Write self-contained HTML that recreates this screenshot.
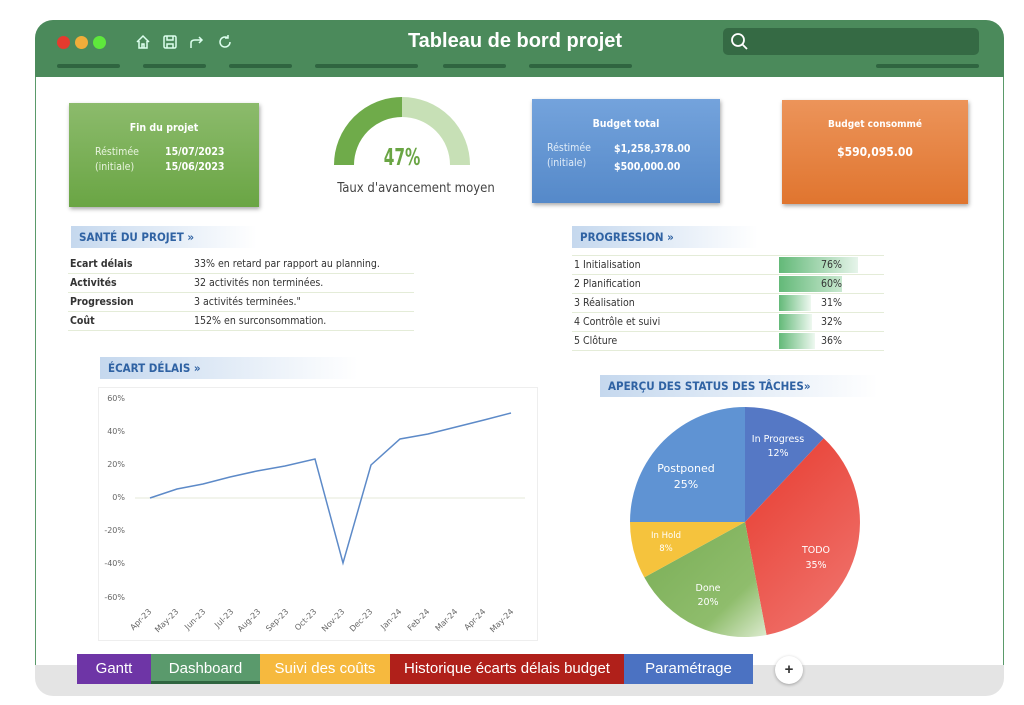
<!DOCTYPE html>
<html><head><meta charset="utf-8"><style>
*{margin:0;padding:0;box-sizing:border-box}
body{width:1024px;height:705px;background:#fff;position:relative;overflow:hidden;font-family:"Liberation Sans",sans-serif}
.a{position:absolute}
.win{left:35px;top:20px;width:969px;height:676px;border-radius:18px;background:#e4e4e4;overflow:hidden}
.hdr{left:0;top:0;width:969px;height:57px;background:#4b8a5b}
.content{left:0;top:57px;width:969px;height:588px;background:#fff;border-left:1px solid #5a9a6a;border-right:1px solid #5a9a6a}
.bar{height:4px;background:#2f6540;border-radius:2px;top:44px}
.card{color:#fff;font-family:"DejaVu Sans Condensed","DejaVu Sans",sans-serif;font-size:10.5px;text-align:center;box-shadow:1px 2px 4px rgba(0,0,0,.35)}
.sec{height:22px;background:linear-gradient(90deg,#c5d8ee,#fff);color:#2f62a3;font-family:"DejaVu Sans Condensed","DejaVu Sans",sans-serif;font-size:11.5px;font-weight:bold;line-height:22px;padding-left:8px}
.row{font-family:"DejaVu Sans Condensed","DejaVu Sans",sans-serif;font-size:10.5px;color:#333;height:19px;line-height:18px;border-bottom:1px solid #e4ecd8}
.tab{top:0;height:30px;color:#fff;font-size:15px;line-height:30px;text-align:center}
.ax{font-family:"DejaVu Sans",sans-serif;font-size:8px;fill:#666}
</style></head><body>
<div class="a win">
 <div class="a hdr">
  <div class="a" style="left:22px;top:16px;width:13px;height:13px;border-radius:50%;background:#e53a2e"></div>
  <div class="a" style="left:40px;top:16px;width:13px;height:13px;border-radius:50%;background:#f0ad3a"></div>
  <div class="a" style="left:58px;top:16px;width:13px;height:13px;border-radius:50%;background:#5ee83c"></div>
  <svg class="a" style="left:100px;top:13px" width="110" height="18" fill="none" stroke="#dfe" stroke-width="1.5">
   <path d="M2 9 L8 3 L14 9 M4 8 V15 H12 V8 M7 15 V11 H9 V15"/>
   <rect x="29" y="3" width="12" height="12" rx="1.5"/><path d="M32 3 V7 H38 V3 M32 15 V11 H38 V15"/>
   <path d="M56 15 V10 Q56 7 60 7 H67 M64 4 L67 7 L64 10"/>
   <path d="M93 5 A5 5 0 1 0 95 9 M93 2 V5 H90"/>
  </svg>
  <div class="a" style="left:330px;top:10px;width:300px;text-align:center;color:#fff;font-size:20px;font-weight:bold">Tableau de bord projet</div>
  <div class="a" style="left:688px;top:8px;width:256px;height:27px;border-radius:5px;background:#356a44"></div>
  <svg class="a" style="left:695px;top:12px" width="20" height="20" fill="none" stroke="#fff" stroke-width="1.8"><circle cx="8" cy="8" r="6"/><path d="M12.5 12.5 L17 17"/></svg>
  <div class="a bar" style="left:22px;width:63px"></div>
  <div class="a bar" style="left:108px;width:63px"></div>
  <div class="a bar" style="left:194px;width:63px"></div>
  <div class="a bar" style="left:280px;width:103px"></div>
  <div class="a bar" style="left:408px;width:63px"></div>
  <div class="a bar" style="left:494px;width:103px"></div>
  <div class="a bar" style="left:841px;width:103px"></div>
 </div>
 <div class="a content"></div>
</div>

<div class="a card" style="left:69px;top:103px;width:190px;height:104px;background:linear-gradient(#8cbb6c,#6aa544)">
 <div style="margin-top:19px;font-weight:bold">Fin du projet</div>
 <div class="a" style="left:26px;top:42px;text-align:left;line-height:15px;color:#e8f4de">Réstimée<br>(initiale)</div>
 <div class="a" style="left:96px;top:42px;text-align:left;line-height:15px;font-weight:bold">15/07/2023<br>15/06/2023</div>
</div>
<svg class="a" style="left:330px;top:95px" width="145" height="75">
 <path d="M14 70 A58 58 0 0 1 72 12" stroke="#6fab4a" stroke-width="20" fill="none"/>
 <path d="M72 12 A58 58 0 0 1 130 70" stroke="#c7e0b6" stroke-width="20" fill="none"/>
 <text x="0" y="0" text-anchor="middle" font-family="'DejaVu Sans Condensed',sans-serif" font-weight="bold" font-size="20" fill="#6aa544" transform="translate(72,70) scale(0.85,1.15)">47%</text>
</svg>
<div class="a" style="left:330px;top:181px;width:172px;text-align:center;font-family:'DejaVu Sans Condensed','DejaVu Sans',sans-serif;font-size:13px;color:#444">Taux d'avancement moyen</div>

<div class="a card" style="left:532px;top:99px;width:188px;height:104px;background:linear-gradient(#74a3dc,#5589c9)">
 <div style="margin-top:19px;font-weight:bold">Budget total</div>
 <div class="a" style="left:15px;top:42px;text-align:left;line-height:15px;color:#e0ecf8">Réstimée<br>(initiale)</div>
 <div class="a" style="left:82px;top:41px;text-align:left;line-height:18px;font-weight:bold">$1,258,378.00<br>$500,000.00</div>
</div>
<div class="a card" style="left:782px;top:100px;width:186px;height:104px;background:linear-gradient(#ec945a,#e0752f)">
 <div style="margin-top:19px;font-weight:bold;font-size:10px">Budget consommé</div>
 <div style="margin-top:15px;font-weight:bold;font-size:12px">$590,095.00</div>
</div>

<div class="a sec" style="left:71px;top:226px;width:186px">SANTÉ DU PROJET »</div>
<div class="a" style="left:68px;top:255px;width:346px">
 <div class="row"><b class="a" style="left:2px">Ecart délais</b><span class="a" style="left:126px">33% en retard par rapport au planning.</span></div>
 <div class="row"><b class="a" style="left:2px;top:19px">Activités</b><span class="a" style="left:126px;top:19px">32 activités non terminées.</span></div>
 <div class="row"><b class="a" style="left:2px;top:38px">Progression</b><span class="a" style="left:126px;top:38px">3 activités terminées."</span></div>
 <div class="row"><b class="a" style="left:2px;top:57px">Coût</b><span class="a" style="left:126px;top:57px">152% en surconsommation.</span></div>
</div>

<div class="a sec" style="left:572px;top:226px;width:186px">PROGRESSION »</div>
<div class="a" style="left:572px;top:255px;width:312px;border-top:1px solid #e4ecd8">
 <div class="row" style="position:relative;padding-left:2px">1 Initialisation<div class="a" style="left:207px;top:1px;width:79px;height:16px;background:linear-gradient(90deg,#63b978,#e6f4ea)"></div><span class="a" style="left:249px">76%</span></div>
 <div class="row" style="position:relative;padding-left:2px">2 Planification<div class="a" style="left:207px;top:1px;width:63px;height:16px;background:linear-gradient(90deg,#63b978,#c9e8d0)"></div><span class="a" style="left:249px">60%</span></div>
 <div class="row" style="position:relative;padding-left:2px">3 Réalisation<div class="a" style="left:207px;top:1px;width:32px;height:16px;background:linear-gradient(90deg,#63b978,#eef8f0)"></div><span class="a" style="left:249px">31%</span></div>
 <div class="row" style="position:relative;padding-left:2px">4 Contrôle et suivi<div class="a" style="left:207px;top:1px;width:33px;height:16px;background:linear-gradient(90deg,#63b978,#eef8f0)"></div><span class="a" style="left:249px">32%</span></div>
 <div class="row" style="position:relative;padding-left:2px">5 Clôture<div class="a" style="left:207px;top:1px;width:36px;height:16px;background:linear-gradient(90deg,#63b978,#eef8f0)"></div><span class="a" style="left:249px">36%</span></div>
</div>

<div class="a sec" style="left:100px;top:357px;width:258px">ÉCART DÉLAIS »</div>
<div class="a" style="left:98px;top:387px;width:440px;height:254px;border:1px solid #eee"></div>
<svg class="a" style="left:0;top:0" width="560" height="660">
 <g class="ax" text-anchor="end">
  <text x="125" y="401">60%</text><text x="125" y="434">40%</text><text x="125" y="467">20%</text><text x="125" y="500">0%</text><text x="125" y="533">-20%</text><text x="125" y="566">-40%</text><text x="125" y="600">-60%</text>
 </g>
 <line x1="135" y1="498" x2="525" y2="498" stroke="#e4ead8"/>
 <polyline fill="none" stroke="#5d8ac8" stroke-width="1.5" points="150,498 177,489 203,484 230,477 257,471 285,466 315,459 343,563 371,465 400,439 428,434 456,427 484,420 511,413"/>
 <g class="ax" text-anchor="end">
  <text transform="translate(152,612) rotate(-45)">Apr-23</text><text transform="translate(179,612) rotate(-45)">May-23</text><text transform="translate(206,612) rotate(-45)">Jun-23</text><text transform="translate(234,612) rotate(-45)">Jul-23</text><text transform="translate(261,612) rotate(-45)">Aug-23</text><text transform="translate(289,612) rotate(-45)">Sep-23</text><text transform="translate(317,612) rotate(-45)">Oct-23</text><text transform="translate(345,612) rotate(-45)">Nov-23</text><text transform="translate(373,612) rotate(-45)">Dec-23</text><text transform="translate(402,612) rotate(-45)">Jan-24</text><text transform="translate(430,612) rotate(-45)">Feb-24</text><text transform="translate(458,612) rotate(-45)">Mar-24</text><text transform="translate(486,612) rotate(-45)">Apr-24</text><text transform="translate(514,612) rotate(-45)">May-24</text>
 </g>
</svg>

<div class="a sec" style="left:600px;top:375px;width:278px">APERÇU DES STATUS DES TÂCHES»</div>
<svg class="a" style="left:600px;top:400px" width="280" height="245" font-family="'DejaVu Sans',sans-serif" font-size="9.5" fill="#fff" text-anchor="middle">
 <defs>
  <linearGradient id="gr" x1="0" y1="0" x2="0.6" y2="1"><stop offset="0" stop-color="#e73a2e"/><stop offset="1" stop-color="#ef6f68"/></linearGradient>
  <linearGradient id="gg" x1="0" y1="0" x2="1" y2="1"><stop offset="0" stop-color="#79ad55"/><stop offset="0.7" stop-color="#8fbd6c"/><stop offset="1" stop-color="#dcebcf"/></linearGradient>
 </defs>
 <path d="M145 122 L145 7 A115 115 0 0 1 223.7 38.2 Z" fill="#5578c5"/>
 <path d="M145 122 L223.7 38.2 A115 115 0 0 1 166.5 235 Z" fill="url(#gr)"/>
 <path d="M145 122 L166.5 235 A115 115 0 0 1 44.3 177.4 Z" fill="url(#gg)"/>
 <path d="M145 122 L44.3 177.4 A115 115 0 0 1 30 122 Z" fill="#f5c33d"/>
 <path d="M145 122 L30 122 A115 115 0 0 1 145 7 Z" fill="#5f93d3"/>
 <text x="178" y="42">In Progress</text><text x="178" y="56">12%</text>
 <text x="86" y="72" font-size="11">Postponed</text><text x="86" y="88" font-size="11">25%</text>
 <text x="216" y="153">TODO</text><text x="216" y="168">35%</text>
 <text x="66" y="138" font-size="8.5">In Hold</text><text x="66" y="151" font-size="8.5">8%</text>
 <text x="108" y="191">Done</text><text x="108" y="205">20%</text>
</svg>

<div class="a" style="left:77px;top:654px;height:30px;width:676px">
 <div class="a tab" style="left:0;width:74px;background:#6e35a6">Gantt</div>
 <div class="a tab" style="left:74px;width:109px;background:#5a9a6c;border-bottom:3px solid #2f6540">Dashboard</div>
 <div class="a tab" style="left:183px;width:130px;background:#f6b93e">Suivi des coûts</div>
 <div class="a tab" style="left:313px;width:234px;background:#b0201a">Historique écarts délais budget</div>
 <div class="a tab" style="left:547px;width:129px;background:#4b72c2">Paramétrage</div>
</div>
<div class="a" style="left:775px;top:656px;width:28px;height:28px;border-radius:50%;background:#fff;box-shadow:0 1px 3px rgba(0,0,0,.3);text-align:center;line-height:28px;font-size:15px;font-weight:bold;color:#333">+</div>
</body></html>
